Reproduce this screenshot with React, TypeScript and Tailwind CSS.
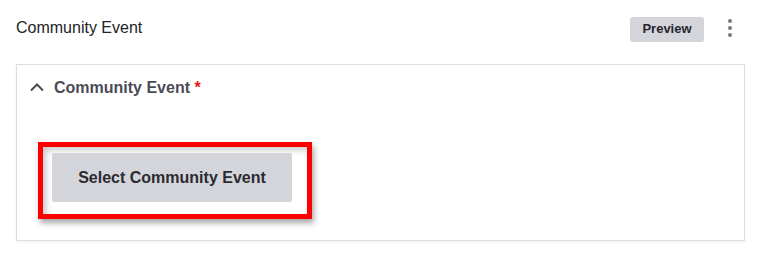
export default function App() {
  return (
    <div className="w-[758px] h-[259px] bg-white font-['Liberation_Sans',Arial,sans-serif]">
      <div className="flex items-center justify-between h-[55px] pl-4 pr-[18px]">
        <h1 className="text-[16px] text-[#222226]">Community Event</h1>
        <div className="flex items-center gap-4">
          <button className="h-[25px] w-[74px] mt-[3px] rounded-[3px] bg-[#d4d5da] text-[13px] font-bold text-[#26262c]">
            Preview
          </button>
          <button className="flex w-5 flex-col items-center gap-[3px] mt-[1px]" aria-label="More">
            <span className="h-1 w-1 rounded-full bg-[#7a7a80]" />
            <span className="h-1 w-1 rounded-full bg-[#7a7a80]" />
            <span className="h-1 w-1 rounded-full bg-[#7a7a80]" />
          </button>
        </div>
      </div>

      <section className="ml-4 mr-[13px] mt-[9px] border border-[#dedee0] shadow-[0_1px_2px_rgba(0,0,0,0.06)]">
        <div className="flex h-[46px] items-center gap-[10px] pl-[13px]">
          <svg width="14" height="9" viewBox="0 0 14 9" className="mt-[-1px]">
            <polyline points="1,7.5 7,1.5 13,7.5" fill="none" stroke="#4b4b55" strokeWidth="2" />
          </svg>
          <h2 className="text-[16px] font-bold text-[#4b4b55]">
            Community Event <span className="text-[#ee1111]">*</span>
          </h2>
        </div>
        <div className="pl-[21px] pt-[31px] pb-[21px]">
          <div className="inline-block border-[5px] border-[#ff0000] pl-[9px] pr-[15px] pt-[6px] pb-[12px] shadow-[2px_4px_6px_rgba(0,0,0,0.35),inset_3px_3px_6px_rgba(0,0,0,0.22)]">
            <button className="block h-[49px] w-[240px] rounded-[2px] bg-[#d4d5da] text-[16px] font-bold text-[#2b2b31]">
              Select Community Event
            </button>
          </div>
        </div>
      </section>
    </div>
  );
}
